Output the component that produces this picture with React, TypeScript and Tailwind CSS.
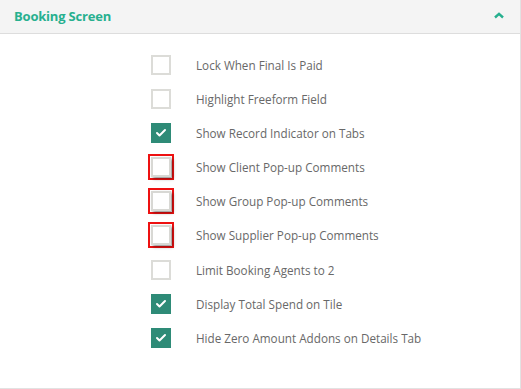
import { Check } from "lucide-react";

interface Option {
  label: string;
  checked: boolean;
  flagged?: boolean;
}

const options: Option[] = [
  { label: "Lock When Final Is Paid", checked: false },
  { label: "Highlight Freeform Field", checked: false },
  { label: "Show Record Indicator on Tabs", checked: true },
  { label: "Show Client Pop-up Comments", checked: false, flagged: true },
  { label: "Show Group Pop-up Comments", checked: false, flagged: true },
  { label: "Show Supplier Pop-up Comments", checked: false, flagged: true },
  { label: "Limit Booking Agents to 2", checked: false },
  { label: "Display Total Spend on Tile", checked: true },
  { label: "Hide Zero Amount Addons on Details Tab", checked: true },
];

function Box({ checked, flagged }: { checked: boolean; flagged?: boolean }) {
  if (checked) {
    return (
      <div className="w-5 h-5 bg-[#2e8b77] flex items-center justify-center">
        <Check className="w-3 h-3 text-white" strokeWidth={4} />
      </div>
    );
  }
  if (flagged) {
    return (
      <div className="w-[26px] h-[26px] -m-[3px] border-2 border-[#ee1111] flex items-center justify-center">
        <div className="w-5 h-5 border-2 border-[#d8d8d4] bg-white shadow-[2px_2px_3px_rgba(0,0,0,0.4)]" />
      </div>
    );
  }
  return <div className="w-5 h-5 border-2 border-[#dcdcd8] bg-white" />;
}

export default function App() {
  return (
    <div
      className="w-[521px] h-[389px] bg-white border-r border-b border-[#e2e2e2] flex flex-col"
      style={{ fontFamily: '"Open Sans", sans-serif' }}
    >
      <div className="h-[34px] bg-[#f4f4f4] border-b border-[#dddddd] flex items-center justify-between pl-[14px] pr-[16px] shrink-0">
        <span className="text-[13px] font-bold text-[#27b08f] tracking-[-0.2px] mt-[1px]">Booking Screen</span>
        <svg width="10" height="7" viewBox="0 0 10 7" className="mb-[3px]">
          <path d="M1 5.5 L5 1.8 L9 5.5" fill="none" stroke="#27b08f" strokeWidth="2.4" />
        </svg>
      </div>
      <div className="flex flex-col pl-[151px] pt-[21px]">
        {options.map((o) => (
          <div key={o.label} className="h-[34.1px] flex items-start">
            <div className="w-5 h-5 flex items-center justify-center">
              <Box checked={o.checked} flagged={o.flagged} />
            </div>
            <span className="ml-[25px] text-[11.7px] leading-[21px] text-[#686868]">{o.label}</span>
          </div>
        ))}
      </div>
    </div>
  );
}
